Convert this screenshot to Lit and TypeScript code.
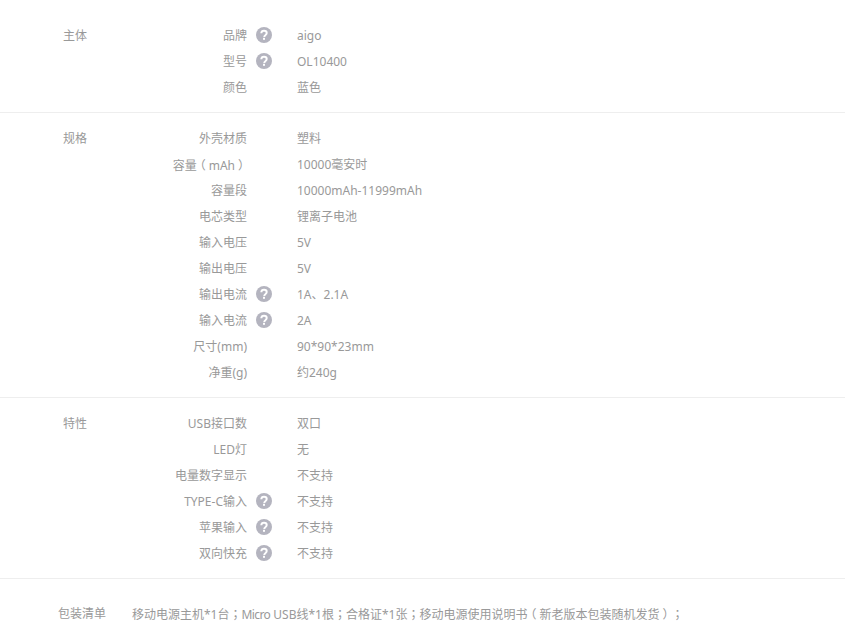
import { LitElement, html, css, nothing } from "lit";
import { customElement } from "lit/decorators.js";

type Row = [string, string, boolean?];
const groups: { title: string; rows: Row[] }[] = [
  { title: "主体", rows: [["品牌", "aigo", true], ["型号", "OL10400", true], ["颜色", "蓝色"]] },
  {
    title: "规格",
    rows: [
      ["外壳材质", "塑料"],
      ["容量（mAh）", "10000毫安时"],
      ["容量段", "10000mAh-11999mAh"],
      ["电芯类型", "锂离子电池"],
      ["输入电压", "5V"],
      ["输出电压", "5V"],
      ["输出电流", "1A、2.1A", true],
      ["输入电流", "2A", true],
      ["尺寸(mm)", "90*90*23mm"],
      ["净重(g)", "约240g"],
    ],
  },
  {
    title: "特性",
    rows: [
      ["USB接口数", "双口"],
      ["LED灯", "无"],
      ["电量数字显示", "不支持"],
      ["TYPE-C输入", "不支持", true],
      ["苹果输入", "不支持", true],
      ["双向快充", "不支持", true],
    ],
  },
];

const packageText = "移动电源主机*1台；Micro USB线*1根；合格证*1张；移动电源使用说明书（新老版本包装随机发货）；";

@customElement("app-root")
export class AppRoot extends LitElement {
  static styles = css`
    :host {
      display: block;
      width: 845px;
      height: 639px;
      overflow: hidden;
      background: #fff;
      color: #999;
      font: 12px/28px "Noto Sans", "Noto Sans CJK SC", sans-serif;
      text-spacing-trim: space-all;
    }
    .group {
      display: grid;
      grid-template-columns: 100px 84px 1fr;
      padding: 12px 0 12px 63px;
      border-bottom: 1px solid #eee;
    }
    .group:first-child {
      padding-top: 22px;
    }
    .title {
      height: 26px;
    }
    .rows {
      grid-column: 2 / 4;
    }
    .row {
      display: grid;
      grid-template-columns: 84px 50px 1fr;
      height: 26px;
    }
    .key {
      text-align: right;
      white-space: nowrap;
      height: 26px;
    }
    .tip {
      display: flex;
      align-items: center;
      height: 26px;
      padding-left: 9px;
    }
    .tip svg {
      display: block;
    }
    .package {
      display: flex;
      padding: 21px 0 0 58px;
    }
    .package .name {
      width: 74px;
    }
    .punct {
      font-family: "Noto Sans CJK TC", sans-serif;
    }
    .paren {
      display: inline-block;
      padding: 0 3px;
      font-feature-settings: "halt";
    }
    .narrow {
      letter-spacing: -0.6px;
    }
  `;

  private icon() {
    return html`<svg width="16" height="16" viewBox="0 0 16 16">
      <circle cx="8" cy="8" r="8" fill="#b4b4bf"></circle>
      <path d="M5.3 6.2C5.4 4.6 6.5 3.8 8 3.8c1.6 0 2.7.9 2.7 2.2 0 1.1-.6 1.6-1.4 2.2-.7.5-1 .8-1 1.7" fill="none" stroke="#fff" stroke-width="2"></path>
      <rect x="7" y="10.8" width="2" height="2" fill="#fff"></rect>
    </svg>`;
  }

  private text(s: string) {
    return s.split(/([；（）]|Micro)/).map((part) => {
      if (part === "Micro") return html`<span class="narrow">${part}</span>`;
      if (part === "；") return html`<span class="punct">${part}</span>`;
      if (part === "（" || part === "）") return html`<span class="punct paren">${part}</span>`;
      return part;
    });
  }

  render() {
    return html`
      ${groups.map(
        (g) => html`<div class="group">
          <div class="title">${g.title}</div>
          <div class="rows">
            ${g.rows.map(
              ([k, v, tip]) => html`<div class="row">
                <div class="key">${this.text(k)}</div>
                <div class="tip">${tip ? this.icon() : nothing}</div>
                <div class="val">${v}</div>
              </div>`
            )}
          </div>
        </div>`
      )}
      <div class="package">
        <div class="name">包装清单</div>
        <div>${this.text(packageText)}</div>
      </div>
    `;
  }
}
